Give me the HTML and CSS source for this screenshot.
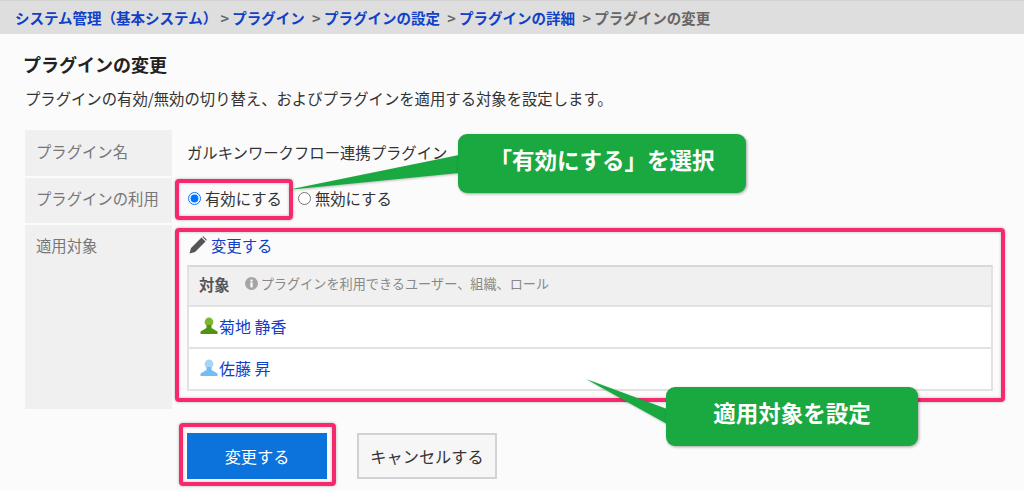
FILE: index.html
```html
<!DOCTYPE html>
<html lang="ja">
<head>
    <meta charset="UTF-8">
    <title>プラグインの変更</title>
    <link rel="stylesheet" href="styles.css">
</head>
<body>
    <nav class="breadcrumb">
        <a href="#">システム管理（基本システム）</a>
        <span class="sep">&gt;</span> <a href="#">プラグイン</a>
        <span class="sep">&gt;</span> <a href="#">プラグインの設定</a>
        <span class="sep">&gt;</span> <a href="#">プラグインの詳細</a>
        <span class="sep">&gt;</span> <span class="current">プラグインの変更</span>
    </nav>

    <main class="content">
        <h1 class="title">プラグインの変更</h1>
        <p class="desc">プラグインの有効/無効の切り替え、およびプラグインを適用する対象を設定します。</p>

        <div class="form">
            <div class="label label-name">プラグイン名</div>
            <div class="value value-name">ガルキンワークフロー連携プラグイン</div>

            <div class="label label-use">プラグインの利用</div>
            <div class="value value-use">
                <label class="radio"><input type="radio" name="use" checked>有効にする</label>
                <label class="radio"><input type="radio" name="use">無効にする</label>
            </div>

            <div class="label label-target">適用対象</div>
            <div class="value value-target">
                <a class="edit-link" href="#">
                    <svg class="pencil" width="18" height="18" viewBox="0 0 18 18"><path d="M0.5 17.5 L2 12 L12.5 1.5 L16.5 5.5 L6 16 Z M13.3 0.7 L14.3 0.2 L17.8 3.7 L17.3 4.7 Z" fill="#555"/></svg>変更する
                </a>
                <div class="targets">
                    <div class="targets-head">
                        <strong>対象</strong>
                        <span class="hint">
                            <svg width="13" height="13" viewBox="0 0 13 13"><circle cx="6.5" cy="6.5" r="6.5" fill="#a5a5a5"/><rect x="5.4" y="5.4" width="2.2" height="5" fill="#fff"/><rect x="5.4" y="2.6" width="2.2" height="1.9" fill="#fff"/></svg>
                            プラグインを利用できるユーザー、組織、ロール
                        </span>
                    </div>
                    <div class="targets-row">
                        <svg class="user" width="18" height="18" viewBox="0 0 18 18"><circle cx="9" cy="5" r="4.4" fill="#7cb82f"/><path d="M6.5 8 L11.5 8 L11.5 11 L17.5 14.5 L17.5 17 L0.5 17 L0.5 14.5 L6.5 11 Z" fill="#4f9412"/></svg>
                        <a href="#">菊地 静香</a>
                    </div>
                    <div class="targets-row">
                        <svg class="user" width="18" height="18" viewBox="0 0 18 18"><circle cx="9" cy="5" r="4.4" fill="#a5d4f7"/><path d="M6.5 8 L11.5 8 L11.5 11 L17.5 14.5 L17.5 17 L0.5 17 L0.5 14.5 L6.5 11 Z" fill="#72bdf2"/></svg>
                        <a href="#">佐藤 昇</a>
                    </div>
                </div>
            </div>
        </div>

        <div class="actions">
            <button class="btn btn-primary">変更する</button>
            <button class="btn btn-cancel">キャンセルする</button>
        </div>
    </main>

    <!-- 注釈（スクリーンショットの上に重ねる） -->
    <div class="mark mark-radio"></div>
    <div class="mark mark-target"></div>
    <div class="mark mark-submit"></div>

    <svg class="tails" width="1024" height="491" viewBox="0 0 1024 491">
        <polygon points="287,190 459,155 459,173" fill="#1aa841"/>
        <polygon points="586,379 667,409 667,424" fill="#1aa841"/>
    </svg>
    <div class="callout callout-radio">「有効にする」を選択</div>
    <div class="callout callout-target">適用対象を設定</div>
</body>
</html>
```

FILE: styles.css
```css
* { box-sizing: border-box; }
html, body { height: 491px; overflow: hidden; }
body { margin: 0; background: #fbfbfb; color: #333; font-family: "Noto Sans CJK JP", "Noto Sans", sans-serif; font-size: 15.35px; position: relative; }
a { color: #1040c8; text-decoration: none; }

.breadcrumb { height: 34px; line-height: 33px; padding-left: 15px; background: #dedede; border-top: 1px solid #d2d2d2; font-size: 14.5px; font-weight: bold; white-space: nowrap; }
.breadcrumb .sep { color: #666; margin-left: 4px; }
.breadcrumb .sep:first-of-type { margin-left: 0; }
.breadcrumb .current { color: #666; }

.content { padding: 17px 20px 0 25px; }
.title { margin: 0 0 0 -2px; font-size: 18px; line-height: 26px; font-weight: bold; color: #222; }
.desc { margin: 9px 0 0; line-height: 24px; }

.form { display: grid; grid-template-columns: 147px 1fr; grid-template-rows: 46px 45px 184px; row-gap: 2px; margin-top: 20px; }
.label { background: #f0f0f0; color: #777; padding-left: 11px; line-height: 42px; }
.label-use { line-height: 40px; }
.label-target { line-height: 40px; }
.value { padding-left: 15px; }
.value-name { line-height: 45px; }
.value-use { display: flex; gap: 16px; align-items: center; padding: 0 0 5px 16px; }
.radio { display: flex; align-items: center; }
.radio input { width: 13px; height: 13px; margin: 0 4px 0 0; accent-color: #0075ff; }

.edit-link { display: flex; align-items: center; height: 40px; padding: 0 0 1px 2px; }
.pencil { margin-right: 4px; }
.targets { width: 806px; border: 2px solid #e2e2e2; border-top-color: #d8d8d8; background: #fff; }
.targets-head { display: flex; align-items: center; height: 33px; padding: 0 0 5px 10px; background: #f0f0f0; border-bottom: 2px solid #e2e2e2; box-sizing: content-box; }
.targets-head strong { color: #555; }
.hint { display: flex; align-items: center; gap: 3px; margin-left: 15px; color: #888; font-size: 13.15px; }
.targets-row { display: flex; align-items: center; height: 42px; padding: 0 0 2px 11px; border-bottom: 2px solid #e2e2e2; font-size: 16px; }
.targets-row:last-child { border-bottom: 0; height: 40px; }
.user { margin-right: 1px; }

.actions { display: flex; gap: 30px; margin: 24px 0 0 162px; }
.btn { width: 140px; height: 46px; font: inherit; font-size: 16.2px; border-radius: 0; padding: 0; }
.btn-primary { background: #0c73dd; color: #fff; border: 0; }
.btn-cancel { background: #f6f6f6; color: #333; border: 2px solid #d2d2d2; }

.mark { position: absolute; border: 4px solid #f5296b; border-radius: 4px; box-shadow: 0 0 3px rgba(0, 0, 0, .3), inset 0 0 3px rgba(0, 0, 0, .25); }
.mark-radio { left: 175px; top: 179px; width: 118px; height: 41px; }
.mark-target { left: 175px; top: 228px; width: 830px; height: 174px; }
.mark-submit { left: 179px; top: 423px; width: 157px; height: 63px; }

.tails { position: absolute; left: 0; top: 0; filter: drop-shadow(1px 1px 1px rgba(0, 0, 0, .25)); }
.callout { position: absolute; display: flex; align-items: center; justify-content: center; height: 59px; padding-bottom: 10px; background: #1aa841; color: #fff; font-size: 22.5px; font-weight: bold; border-radius: 9px; box-shadow: 1px 1px 3px rgba(0, 0, 0, .35); }
.callout-radio { left: 458px; top: 134px; width: 288px; }
.callout-target { left: 666px; top: 387px; width: 252px; }
```
